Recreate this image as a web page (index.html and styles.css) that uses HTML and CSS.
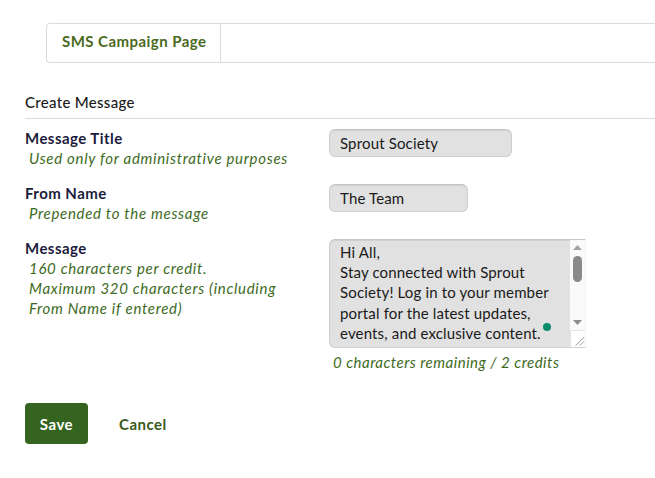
FILE: index.html
```html
<!DOCTYPE html>
<html>
<head>
<meta charset="utf-8">
<link rel="stylesheet" href="styles.css">
</head>
<body>
<div class="page">
  <div class="tabs">
    <div class="tab">SMS Campaign Page</div>
  </div>
  <div class="section-title">Create Message</div>
  <div class="row row-title">
    <div class="label-col">
      <div class="label">Message Title</div>
      <div class="help">Used only for administrative purposes</div>
    </div>
    <div class="field-col">
      <input class="input input-title" type="text" value="Sprout Society">
    </div>
  </div>
  <div class="row row-from">
    <div class="label-col">
      <div class="label">From Name</div>
      <div class="help">Prepended to the message</div>
    </div>
    <div class="field-col">
      <input class="input input-from" type="text" value="The Team">
    </div>
  </div>
  <div class="row row-msg">
    <div class="label-col">
      <div class="label">Message</div>
      <div class="help">160 characters per credit.<br>Maximum 320 characters (including<br>From Name if entered)</div>
    </div>
    <div class="field-col">
      <div class="ta-wrap">
        <textarea class="textarea">Hi All,
Stay connected with Sprout Society! Log in to your member portal for the latest updates, events, and exclusive content.

Don't miss our upcoming gatherings and special offers just for members. Reply STOP to opt out at any time.

Thanks for being part of our growing community!</textarea>
        <div class="scrollbar">
          <div class="sb-btn">
            <svg width="15" height="15" viewBox="0 0 15 15"><polygon points="3,10 12,10 7.5,5" fill="#a3a3a3"/></svg>
          </div>
          <div class="sb-track"><div class="sb-thumb"></div></div>
          <div class="sb-btn">
            <svg width="15" height="15" viewBox="0 0 15 15"><polygon points="3,5 12,5 7.5,10" fill="#8c8c8c"/></svg>
          </div>
          <div class="sb-corner">
            <svg width="15" height="15" viewBox="0 0 15 15"><path d="M14 5 L5 14 M14 9.5 L9.5 14" stroke="#8a8a8a" stroke-width="1" fill="none"/></svg>
          </div>
        </div>
        <span class="dot"></span>
      </div>
      <div class="counter">0 characters remaining / 2 credits</div>
    </div>
  </div>
  <div class="actions">
    <button class="btn-save">Save</button>
    <button class="btn-cancel">Cancel</button>
  </div>
</div>
</body>
</html>
```
FILE: styles.css
```css
* { box-sizing: border-box; }
html, body { margin: 0; padding: 0; background: #fff; }
body { font-family: "Lato", "Open Sans", sans-serif; font-size: 15px; color: #1c1c3a; }
.page { padding: 23px 0 0 25px; }
.tabs {
  margin-left: 21px;
  height: 40px;
  border: 1px solid #dcdcdc;
  border-right: none;
  border-radius: 4px 0 0 4px;
  display: flex;
}
.tab {
  width: 174px;
  border-right: 1px solid #dcdcdc;
  display: flex;
  align-items: center;
  padding-left: 15px;
  padding-bottom: 5px;
  font-weight: 700;
  color: #4a6a1d;
  font-size: 15px;
  letter-spacing: 0.45px;
}
.section-title {
  margin-top: 30px;
  height: 26px;
  line-height: 18px;
  border-bottom: 1px solid #dcdcdc;
  font-size: 15px;
  color: #1a1a1a;
  font-weight: 500;
  letter-spacing: 0.3px;
}
.row { display: flex; }
.row-title { margin-top: 9px; }
.row-from { margin-top: 15px; }
.row-msg { margin-top: 15px; }
.label-col { width: 304px; }
.label { font-weight: 700; font-size: 15px; line-height: 20px; color: #1c1c3c; letter-spacing: 0.45px; }
.help { font-style: italic; color: #3e6a1e; line-height: 20px; padding-left: 4px; letter-spacing: 0.7px; }
.field-col { padding-top: 1px; }
.input {
  font-family: inherit;
  font-size: 15px;
  height: 28px;
  background: #e1e1e1;
  border: 1px solid #cfcfcf;
  border-top-color: #c4c4c4;
  border-radius: 6px;
  padding: 0 10px;
  color: #1a1a1a;
  box-shadow: inset 0 1px 1px rgba(0,0,0,0.08);
  letter-spacing: 0.15px;
}
.input-title { width: 183px; }
.input-from { width: 139px; }
.ta-wrap { position: relative; width: 257px; }
.textarea {
  display: block;
  width: 257px;
  height: 109px;
  font-family: inherit;
  font-size: 15px;
  line-height: 20.2px;
  background: #e1e1e1;
  border: 1px solid #cfcfcf;
  border-top-color: #c4c4c4;
  border-right-color: #f2f2f2;
  border-radius: 6px 0 0 6px;
  padding: 2px 18px 2px 10px;
  color: #1a1a1a;
  overflow: hidden;
  resize: none;
  letter-spacing: 0.15px;
  box-shadow: inset 0 1px 1px rgba(0,0,0,0.08);
}
.scrollbar {
  position: absolute;
  top: 1px;
  bottom: 1px;
  right: 1px;
  width: 15px;
  background: #fafafa;
  display: flex;
  flex-direction: column;
}
.sb-btn { height: 15px; flex: none; }
.sb-btn svg, .sb-corner svg { display: block; }
.sb-track { height: 60px; flex: none; padding-top: 1px; }
.sb-thumb {
  margin-left: 3px;
  width: 9px;
  height: 26px;
  border-radius: 4.5px;
  background: #8a8a8a;
}
.sb-corner {
  flex: 1;
  border-top: 1px solid #e6e6e6;
  border-left: 1px solid #e6e6e6;
  background: #fff;
  display: flex;
  align-items: flex-end;
  justify-content: flex-end;
}
.dot {
  position: absolute;
  left: 214px;
  top: 84px;
  width: 8px;
  height: 8px;
  border-radius: 50%;
  background: #0d8a6c;
}
.counter { margin-top: 4px; padding-left: 4px; font-style: italic; color: #3e6a1e; line-height: 20px; letter-spacing: 0.5px; }
.actions { margin-top: 31px; display: flex; align-items: center; }
.btn-save {
  width: 63px;
  height: 41px;
  background: #346420;
  color: #fff;
  border: none;
  border-radius: 4px;
  font-family: inherit;
  font-weight: 700;
  font-size: 15px;
  letter-spacing: 0.5px;
}
.btn-cancel {
  margin-left: 31px;
  background: none;
  border: none;
  padding: 0;
  font-family: inherit;
  font-weight: 700;
  font-size: 15px;
  color: #3a5a1a;
  letter-spacing: 0.5px;
}
```
